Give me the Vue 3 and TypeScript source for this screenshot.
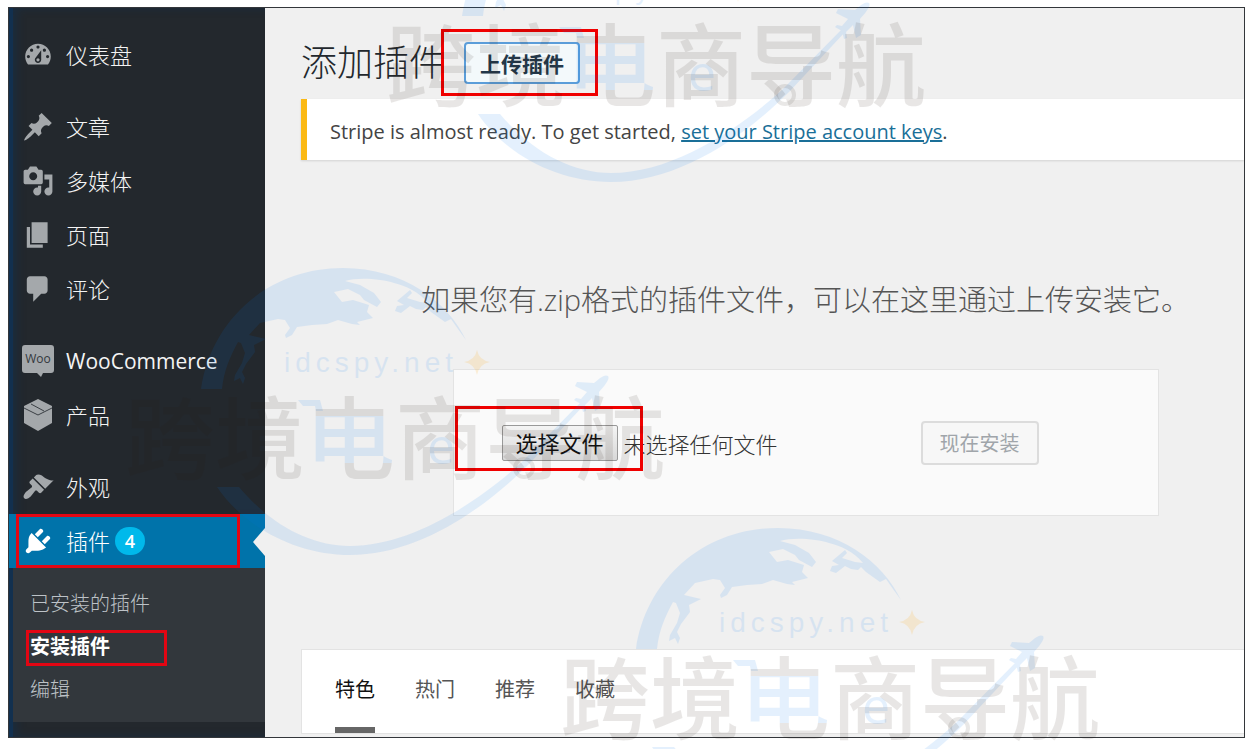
<script setup lang="ts">
import { ref } from 'vue'

interface MenuItem {
  label: string
  icon: string
  path?: string
  gap?: boolean
  active?: boolean
  badge?: number
}

const menu: MenuItem[] = [
  {
    label: '仪表盘',
    icon: 'dashboard',
    path: 'M3.76 16h12.48c1.1-1.37 1.76-3.11 1.76-5 0-4.42-3.58-8-8-8s-8 3.58-8 8c0 1.89.66 3.63 1.76 5zM10 4c.55 0 1 .45 1 1s-.45 1-1 1-1-.45-1-1 .45-1 1-1zM6 6c.55 0 1 .45 1 1s-.45 1-1 1-1-.45-1-1 .45-1 1-1zm8 0c.55 0 1 .45 1 1s-.45 1-1 1-1-.45-1-1 .45-1 1-1zm-5.37 5.55L12 7v6c0 1.1-.9 2-2 2s-2-.9-2-2c0-.57.24-1.08.63-1.45zM4 10c.55 0 1 .45 1 1s-.45 1-1 1-1-.45-1-1 .45-1 1-1zm12 0c.55 0 1 .45 1 1s-.45 1-1 1-1-.45-1-1 .45-1 1-1zm-5 3c0-.55-.45-1-1-1s-1 .45-1 1 .45 1 1 1 1-.45 1-1z'
  },
  {
    label: '文章',
    icon: 'post',
    gap: true,
    path: 'M10.44 3.02l1.82-1.82 6.36 6.35-1.83 1.82c-1.05-.68-2.48-.57-3.41.36l-.75.75c-.92.93-1.04 2.35-.35 3.41l-1.83 1.82-2.41-2.41-2.8 2.79c-.42.42-3.38 2.71-3.8 2.29s1.86-3.39 2.28-3.81l2.79-2.79L4.1 9.36l1.83-1.82c1.05.69 2.48.57 3.4-.36l.75-.75c.93-.92 1.05-2.35.36-3.41z'
  },
  {
    label: '多媒体',
    icon: 'media',
    path: 'M13 11V4c0-.55-.45-1-1-1h-1.67L9 1H5L3.67 3H2c-.55 0-1 .45-1 1v7c0 .55.45 1 1 1h10c.55 0 1-.45 1-1zM7 4.5c1.38 0 2.5 1.12 2.5 2.5S8.38 9.5 7 9.5 4.5 8.38 4.5 7 5.62 4.5 7 4.5zM14 6h5v10.5c0 1.38-1.12 2.5-2.5 2.5S14 17.88 14 16.5s1.12-2.5 2.5-2.5c.17 0 .34.02.5.05V9h-3V6zm-4 8.05V13h2v3.5c0 1.38-1.12 2.5-2.5 2.5S7 17.88 7 16.5 8.12 14 9.5 14c.17 0 .34.02.5.05z'
  },
  { label: '页面', icon: 'page', path: 'M6 15V2h10v13H6zm-1 1h8v2H3V5h2v11z' },
  {
    label: '评论',
    icon: 'comments',
    path: 'M5 2h9c1.1 0 2 .9 2 2v7c0 1.1-.9 2-2 2h-2l-5 5v-5H5c-1.1 0-2-.9-2-2V4c0-1.1.9-2 2-2z'
  },
  { label: 'WooCommerce', icon: 'woo', gap: true },
  { label: '产品', icon: 'product' },
  {
    label: '外观',
    icon: 'appearance',
    gap: true,
    path: 'M14.48 11.06L7.41 3.99l1.5-1.5c.5-.56 2.3-.47 3.51.32 1.21.8 1.43 1.28 2.91 2.1 1.18.64 2.45 1.26 4.45.85zm-.71.71L6.7 4.7 4.93 6.47c-.39.39-.39 1.02 0 1.41l1.06 1.06c.39.39.39 1.03 0 1.42-.6.6-1.43 1.11-2.21 1.69-.35.26-.7.53-1.01.84C1.43 14.23.4 16.08 1.4 17.07c.99 1 2.84-.03 4.18-1.36.31-.31.58-.66.85-1.02.57-.78 1.08-1.61 1.69-2.21.39-.39 1.02-.39 1.41 0l1.06 1.06c.39.39 1.02.39 1.41 0z'
  },
  {
    label: '插件',
    icon: 'plugins',
    active: true,
    badge: 4,
    path: 'M13.11 4.36L9.87 7.6 8 5.73l3.24-3.24c.35-.34 1.05-.2 1.56.32.52.51.66 1.21.31 1.55zm-8 1.77l.91-1.12 9.01 9.01-1.19.84c-.71.71-2.63 1.16-3.82 1.16H6.14L4.9 17.26c-.59.59-1.54.59-2.12 0-.59-.58-.59-1.53 0-2.12l1.24-1.24v-3.88c0-1.13.4-3.19 1.09-3.89zm7.26 3.97l3.24-3.24c.34-.35 1.04-.21 1.55.31.52.51.66 1.21.31 1.55l-3.24 3.25z'
  }
]

const submenu: string[] = ['已安装的插件', '安装插件', '编辑']
const currentSub = '安装插件'

const tabs: string[] = ['特色', '热门', '推荐', '收藏']
const currentTab = ref('特色')

const marks: string[] = ['translate(381 -113)', 'translate(120 260)', 'translate(555 520)']
</script>

<template>
  <div class="page">
    <div class="frame">
      <nav class="sidebar" aria-label="主菜单">
        <ul class="menu">
          <li v-for="item in menu" :key="item.icon" :class="{ gap: item.gap, active: item.active }">
            <a href="#" class="menu-link" :class="{ latin: item.icon === 'woo' }">
              <svg v-if="item.path" class="icon" viewBox="0 0 20 20" aria-hidden="true">
                <path :d="item.path" fill-rule="evenodd" />
              </svg>
              <svg v-else-if="item.icon === 'woo'" class="icon" viewBox="0 0 32 32" aria-hidden="true">
                <path d="M3 0h26a3 3 0 0 1 3 3v22a3 3 0 0 1-3 3H21l-2 4-4-4H3a3 3 0 0 1-3-3V3a3 3 0 0 1 3-3z" />
                <text x="16" y="18" class="woo-text">Woo</text>
              </svg>
              <svg v-else class="icon" viewBox="0 0 32 32" aria-hidden="true">
                <path d="M16 0l14 7v17l-14 8-14-8V7z" />
                <path class="cut" d="M2 9l14 7 14-7M9 5l13 7" />
              </svg>
              <span>{{ item.label }}</span>
              <span v-if="item.badge" class="badge">{{ item.badge }}</span>
            </a>
          </li>
        </ul>
        <ul class="submenu">
          <li v-for="sub in submenu" :key="sub">
            <a href="#" :class="{ current: sub === currentSub }">{{ sub }}</a>
          </li>
        </ul>
      </nav>

      <main class="main">
        <header class="heading">
          <h1>添加插件</h1>
          <button type="button" class="upload-btn">上传插件</button>
        </header>

        <p class="notice">
          Stripe is almost ready. To get started, <a href="#">set your Stripe account keys</a>.
        </p>

        <section class="upload">
          <p class="intro">如果您有.zip格式的插件文件，可以在这里通过上传安装它。</p>
          <form class="upload-form" @submit.prevent>
            <input id="plugin-zip" class="file-input" type="file" accept=".zip" />
            <label for="plugin-zip" class="file-btn">选择文件</label>
            <span class="file-name">未选择任何文件</span>
            <button type="submit" class="install-btn" disabled>现在安装</button>
          </form>
        </section>

        <div class="tabs">
          <button
            v-for="tab in tabs"
            :key="tab"
            type="button"
            :class="{ selected: tab === currentTab }"
            @click="currentTab = tab"
          >
            {{ tab }}
          </button>
        </div>
      </main>
    </div>

    <svg class="watermark" aria-hidden="true">
      <defs>
        <linearGradient id="two-tone" x1="0" y1="0" x2="0" y2="1">
          <stop offset="0.33" stop-color="#28190f" />
          <stop offset="0.33" stop-color="#0078f0" />
          <stop offset="0.71" stop-color="#0078f0" />
          <stop offset="0.71" stop-color="#28190f" />
        </linearGradient>
      </defs>
      <g v-for="mark in marks" :key="mark" :transform="mark">
        <g class="blue">
          <path
            d="M81 129C91 60 148 8 223 8C284 8 328 42 346 80L338 69L331 59L325 62L311 52L306 47L303 50L296 49L290 46L281 53L275 51L277 46L284 45L277 41L290 30L292 33L287 38L300 42L308 43C298 31 286 26 274 23C262 19 238 17 225 21L240 25L254 33L261 42L257 47L244 40L240 35L228 29L214 32L222 42L233 40L249 45L247 52L253 58L237 62L240 65L232 64L218 60L207 64L192 65L177 67L172 75L166 78L165 75L170 68L165 60L158 59L140 63L129 75L146 79L134 85L135 92L126 104L122 112L125 118L123 124L120 118L114 121L115 115L122 103L125 93L121 83L118 82C110 97 104 110 102 129z"
          />
          <path
            d="M97 227H119C150 264 190 286 230 286C292 286 360 241 403 201L462 141L465 144L409 204C361 252 296 295 230 295C176 295 124 267 97 227z"
          />
          <path
            d="M488 116C485 114 481 117 474 123L457 122L455 126L467 132L461 139L456 138L454 140L461 144L463 152L466 151L465 145L472 138L475 151L480 148L479 132C486 124 490 119 488 116z"
          />
          <path d="M178 140H200L203 151H196L195 146H183z" />
        </g>
        <circle class="ring" cx="404" cy="208" r="9" />
        <text class="site" x="164" y="112">idcspy.net</text>
        <path class="star" d="M357 90Q359 100 370 102Q359 104 357 115Q355 104 344 102Q355 100 357 90z" />
        <g class="brand">
          <text x="5" y="212">跨境</text>
          <text x="185" y="212" fill="url(#two-tone)">电</text>
          <text x="275" y="212">商导航</text>
        </g>
        <text class="letter-e" x="307" y="204">e</text>
      </g>
    </svg>
  </div>
</template>

<style>
body {
  margin: 0;
  background: #fff;
}
</style>

<style scoped>
* {
  box-sizing: border-box;
}

.page {
  position: relative;
  display: flex;
  min-height: 100vh;
  padding: 7px 5px 11px 8px;
  overflow: hidden;
  font-family: 'Open Sans', 'Noto Sans CJK SC', sans-serif;
}

.frame {
  flex: 1;
  display: flex;
  border: 1px solid #33363a;
  background: #f0f0f0;
}

ul {
  margin: 0;
  padding: 0;
  list-style: none;
}

a {
  color: inherit;
  text-decoration: none;
}

button {
  font-family: inherit;
}

.sidebar {
  flex: none;
  width: 256px;
  padding-top: 20px;
  background: #23282d;
  box-shadow: inset 4px 0 #12304f, inset 8px 0 8px #12304f80;
  font-weight: 300;
}

.menu .gap {
  margin-top: 18px;
}

.menu-link {
  display: flex;
  align-items: center;
  height: 54px;
  padding-left: 13px;
  color: #f4f4f4;
  font-size: 22px;
  line-height: 32px;
}

.menu-link.latin {
  font-size: 21px;
  font-weight: 400;
}

.icon {
  width: 32px;
  height: 32px;
  margin-right: 12px;
  fill: #a4a8ab;
  overflow: visible;
}

.woo-text {
  fill: #33383d;
  font-size: 12px;
  font-weight: 400;
  text-anchor: middle;
}

.cut {
  fill: none;
  stroke: #3a3f44;
  stroke-width: 1;
}

.active {
  position: relative;
  background: #0073aa;
}

.active .menu-link {
  color: #fff;
}

.active .icon {
  fill: #fff;
}

.active::before {
  content: '';
  position: absolute;
  inset: 0 25px 0 7px;
  border: 3px solid #e30613;
}

.active::after {
  content: '';
  position: absolute;
  top: 14px;
  right: 0;
  border: 14px solid transparent;
  border-left-width: 0;
  border-right: 12px solid #f0f0f0;
}

.badge {
  width: 30px;
  height: 28px;
  margin-left: 5px;
  border-radius: 14px;
  background: #00b9eb;
  font-size: 18px;
  font-weight: 600;
  line-height: 28px;
  text-align: center;
}

.submenu {
  padding: 14px 0 11px;
  background: #32373c;
  box-shadow: inset 4px 0 #12304f;
}

.submenu a {
  position: relative;
  display: block;
  padding-left: 21px;
  color: #bdc2c7;
  font-size: 20px;
  line-height: 43px;
}

.submenu .current {
  color: #fff;
  font-weight: 700;
}

.submenu .current::after {
  content: '';
  position: absolute;
  inset: 5px 98px 2px 17px;
  border: 3px solid #e30613;
}

.main {
  flex: 1;
  min-width: 0;
  display: flex;
  flex-direction: column;
  padding-left: 36px;
}

.heading {
  display: flex;
  align-items: center;
  gap: 19px;
  padding-top: 31px;
}

h1 {
  margin: 0;
  color: #23282d;
  font-size: 36px;
  font-weight: 300;
  line-height: 48px;
}

.upload-btn {
  position: relative;
  height: 42px;
  padding: 0 14px;
  border: 2px solid #5b9dd9;
  border-radius: 4px;
  background: #f3f9fb;
  color: #23384a;
  font-size: 21px;
  font-weight: 700;
}

.upload-btn::after {
  content: '';
  position: absolute;
  inset: -15px -20px -14px -25px;
  border: 3px solid #f00000;
}

.notice {
  margin: 12px 0 0;
  padding: 5px 23px 0;
  border-left: 6px solid #fbb914;
  background: #fff;
  box-shadow: 0 1px 2px #00000020;
  color: #444;
  font-size: 20px;
  line-height: 56px;
}

.notice a {
  color: #1a6f98;
  text-decoration: underline;
}

.upload {
  padding-left: 66px;
}

.intro {
  margin: 120px 0 0;
  color: #555;
  font-size: 29px;
  font-weight: 300;
  line-height: 40px;
  text-align: center;
}

.upload-form {
  display: flex;
  align-items: center;
  max-width: 706px;
  height: 147px;
  margin: 49px auto 0;
  padding: 0 119px 0 48px;
  border: 1px solid #e3e3e3;
  background: #fafafa;
}

.file-input {
  position: absolute;
  width: 1px;
  height: 1px;
  opacity: 0;
}

.file-btn {
  position: relative;
  width: 116px;
  border: 1px solid #999;
  border-radius: 2px;
  background: linear-gradient(#f4f4f4, #d8d8d8);
  color: #111;
  font-size: 22px;
  line-height: 34px;
  text-align: center;
}

.file-btn::after {
  content: '';
  position: absolute;
  inset: -20px -26px -11px -48px;
  border: 3px solid #f00000;
}

.file-name {
  margin-left: 6px;
  color: #333;
  font-size: 22px;
  font-weight: 300;
}

.install-btn {
  height: 44px;
  padding: 0 17px;
  margin-left: auto;
  border: 2px solid #dcdcdc;
  border-radius: 4px;
  background: #f7f7f7;
  color: #a0a5aa;
  font-size: 20px;
}

.tabs {
  display: flex;
  gap: 40px;
  margin: auto 0 3px;
  padding: 0 33px;
  border: 1px solid #e3e3e3;
  border-right: 0;
  background: #fff;
}

.tabs button {
  height: 83px;
  padding: 0;
  border: 0 solid transparent;
  border-bottom-width: 6px;
  background: none;
  color: #555;
  font-size: 20px;
}

.tabs .selected {
  border-bottom-color: #666;
  color: #111;
}

.watermark {
  position: absolute;
  top: 0;
  left: 0;
  width: 100%;
  height: 100%;
  pointer-events: none;
}

.blue,
.letter-e,
.site {
  fill: #0078f0;
  opacity: 0.1;
}

.ring {
  fill: none;
  stroke: #28190f;
  stroke-width: 4;
  opacity: 0.1;
}

.star {
  fill: #ffb020;
  opacity: 0.16;
}

.brand {
  fill: #28190f;
  opacity: 0.1;
  font-size: 90px;
  font-weight: 500;
}

.site {
  font-family: 'Liberation Sans', sans-serif;
  font-size: 28px;
  letter-spacing: 5px;
}

.letter-e {
  font-size: 50px;
  font-weight: 500;
}
</style>
